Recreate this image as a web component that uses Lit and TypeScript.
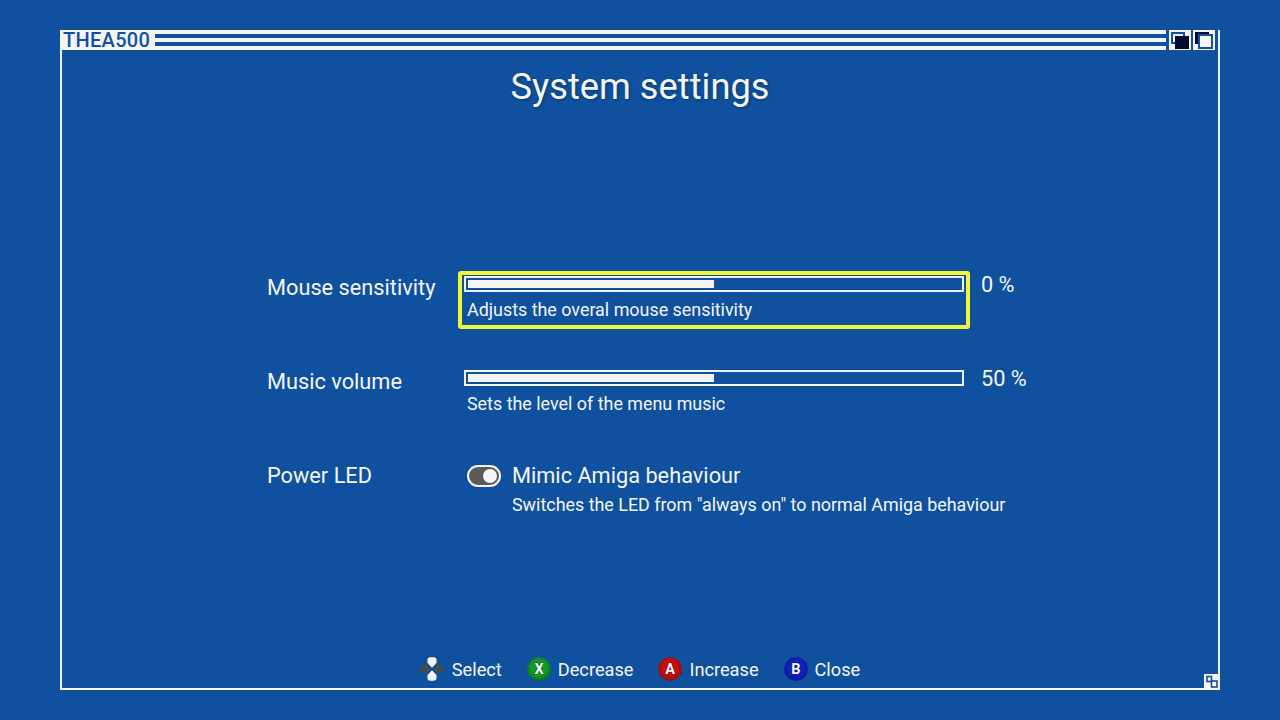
import { LitElement, html, css } from "lit";
import { customElement } from "lit/decorators.js";

@customElement("app-root")
export class AppRoot extends LitElement {
  static styles = css`
    :host { display: block; width: 1280px; height: 720px; background: #0f519e; color: #f5f5f5; font-family: Roboto, sans-serif; overflow: hidden; padding: 30px 60px; box-sizing: border-box; }
    .win { width: 1160px; height: 660px; display: flex; flex-direction: column; border: solid #f5f5f5; border-width: 0 2px 2px 2px; box-sizing: border-box; position: relative; }
    .bar { height: 20px; margin: 0 -2px 0 -2px; padding-right: 5px; display: flex; flex: none; position: relative; }
    .logo { width: 95px; height: 20px; background: #f5f5f5; color: #0f519e; font-size: 20px; font-weight: 500; line-height: 20px; padding-left: 3px; box-sizing: border-box; letter-spacing: 0.3px; flex: none; }
    .stripes { flex: 1; height: 20px; margin-right: 3px; background: repeating-linear-gradient(to bottom, #f5f5f5 0 4px, #0f519e 4px 8px); }
    .btn { width: 22px; height: 20px; background: #f5f5f5; margin-left: 2px; flex: none; }
    .btn.first { margin-left: 0; }
    .btn svg { display: block; }
    .corner { position: absolute; right: 0; top: 0; width: 2px; height: 20px; background: #f5f5f5; }
    h1 { margin: 0; font-size: 36.3px; font-weight: 400; text-align: center; line-height: 42px; padding-top: 16px; text-shadow: 1px 1px 3px rgba(0,0,0,.35); flex: none; height: 221px; box-sizing: border-box; }
    .rows { display: flex; flex-direction: column; padding-left: 205px; gap: 36px; flex: 1; }
    .row { display: flex; height: 58px; }
    .label { width: 191px; font-size: 21.75px; line-height: 26px; padding-top: 4px; flex: none; }
    .box { width: 512px; height: 58px; box-sizing: border-box; border: 4px solid transparent; border-radius: 3px; padding: 1px 2px; flex: none; }
    .box.on { border-color: #f0f53c; }
    .track { width: 500px; height: 16px; border: 2px solid #f5f5f5; box-sizing: border-box; padding: 2px; }
    .fill { height: 8px; background: #f5f5f5; }
    .desc { font-size: 17.9px; line-height: 22px; margin-top: 7px; padding-left: 3px; white-space: nowrap; }
    .val { font-size: 21.75px; line-height: 26px; margin-left: 11px; padding-top: 1px; }
    .toggle { display: flex; padding-left: 3px; }
    .tg { width: 34px; height: 22px; margin-right: 11px; margin-top: 1px; flex: none; }
    .tg svg { display: block; }
    .tt { font-size: 21.75px; line-height: 26px; margin-top: -1px; }
    .tg-wrap .desc { padding-left: 0; margin-top: 5px; }
    .foot { display: flex; justify-content: center; align-items: center; gap: 25px; height: 24px; margin-bottom: 7px; font-size: 18.2px; flex: none; }
    .hint { display: flex; align-items: center; gap: 7px; }
    .hint.sel { gap: 8px; }
    .hint svg { display: block; flex: none; }
    .grip { position: absolute; right: -2px; bottom: -2px; width: 16px; height: 16px; }
    .grip svg { display: block; }
  `;

  circle(letter: string, c: string, d: string) {
    const id = "g" + letter;
    return html`<svg width="24" height="24" viewBox="0 0 24 24">
      <defs><radialGradient id=${id} cx="50%" cy="45%" r="55%"><stop offset="0.6" stop-color=${c}></stop><stop offset="1" stop-color=${d}></stop></radialGradient></defs>
      <circle cx="12" cy="12" r="11.8" fill="url(#${id})"></circle>
      <text x="12" y="17" text-anchor="middle" font-family="Roboto" font-weight="700" font-size="14.5" fill="#f5f5f5" stroke="rgba(0,0,0,.3)" stroke-width="1.5" paint-order="stroke">${letter}</text>
    </svg>`;
  }

  render() {
    return html`
      <div class="win">
        <div class="bar">
          <div class="logo">THEA500</div>
          <div class="stripes"></div>
          <div class="btn first">
            <svg width="22" height="20" viewBox="0 0 22 20">
              <rect x="3" y="3" width="12" height="10" fill="none" stroke="#0f519e" stroke-width="2"></rect>
              <rect x="6" y="6" width="14" height="13" fill="#060a30"></rect>
            </svg>
          </div>
          <div class="btn">
            <svg width="22" height="20" viewBox="0 0 22 20">
              <rect x="2" y="2" width="14" height="12" fill="#060a30"></rect>
              <rect x="6" y="5" width="13" height="13" fill="#f5f5f5" stroke="#0f519e" stroke-width="2"></rect>
            </svg>
          </div>
          <div class="corner"></div>
        </div>
        <h1>System settings</h1>
        <div class="rows">
          <div class="row">
            <div class="label">Mouse sensitivity</div>
            <div class="box on">
              <div class="track"><div class="fill" style="width:246px"></div></div>
              <div class="desc">Adjusts the overal mouse sensitivity</div>
            </div>
            <div class="val">0 %</div>
          </div>
          <div class="row">
            <div class="label">Music volume</div>
            <div class="box">
              <div class="track"><div class="fill" style="width:246px"></div></div>
              <div class="desc">Sets the level of the menu music</div>
            </div>
            <div class="val">50 %</div>
          </div>
          <div class="row">
            <div class="label">Power LED</div>
            <div class="box tg-wrap">
              <div class="toggle">
                <div class="tg">
                  <svg width="34" height="22" viewBox="0 0 34 22">
                    <rect x="1" y="1" width="32" height="20" rx="10" fill="#5a5a5a" stroke="#f5f5f5" stroke-width="2"></rect>
                    <circle cx="23" cy="11" r="7" fill="#f5f5f5"></circle>
                  </svg>
                </div>
                <div>
                  <div class="tt">Mimic Amiga behaviour</div>
                  <div class="desc">Switches the LED from "always on" to normal Amiga behaviour</div>
                </div>
              </div>
            </div>
          </div>
        </div>
        <div class="foot">
          <div class="hint sel">
            <svg width="24" height="24" viewBox="0 0 24 24">
              <path d="M3 7.5 Q0.3 7.5 0.3 10.5 V13.5 Q0.3 16.5 3 16.5 H6 L10.8 12 L6 7.5 Z M21 7.5 Q23.7 7.5 23.7 10.5 V13.5 Q23.7 16.5 21 16.5 H18 L13.2 12 L18 7.5 Z" fill="#454b55"></path>
              <path d="M7.5 3 Q7.5 0.3 10.5 0.3 H13.5 Q16.5 0.3 16.5 3 V6 L12 10.8 L7.5 6 Z M7.5 21 Q7.5 23.7 10.5 23.7 H13.5 Q16.5 23.7 16.5 21 V18 L12 13.2 L7.5 18 Z" fill="#f5f5f5"></path>
            </svg>
            <span>Select</span>
          </div>
          <div class="hint">${this.circle("X", "#109a2c", "#0b6e20")}<span>Decrease</span></div>
          <div class="hint">${this.circle("A", "#c40f0f", "#8e0a0a")}<span>Increase</span></div>
          <div class="hint">${this.circle("B", "#1220c0", "#0c148c")}<span>Close</span></div>
        </div>
        <div class="grip">
          <svg width="16" height="16" viewBox="0 0 16 16">
            <rect width="16" height="16" fill="#f5f5f5"></rect>
            <rect x="3" y="2.5" width="4.5" height="5" fill="none" stroke="#0f519e" stroke-width="1.6"></rect>
            <rect x="7.5" y="7" width="5.5" height="6" fill="none" stroke="#0f519e" stroke-width="1.6"></rect>
          </svg>
        </div>
      </div>
    `;
  }
}
